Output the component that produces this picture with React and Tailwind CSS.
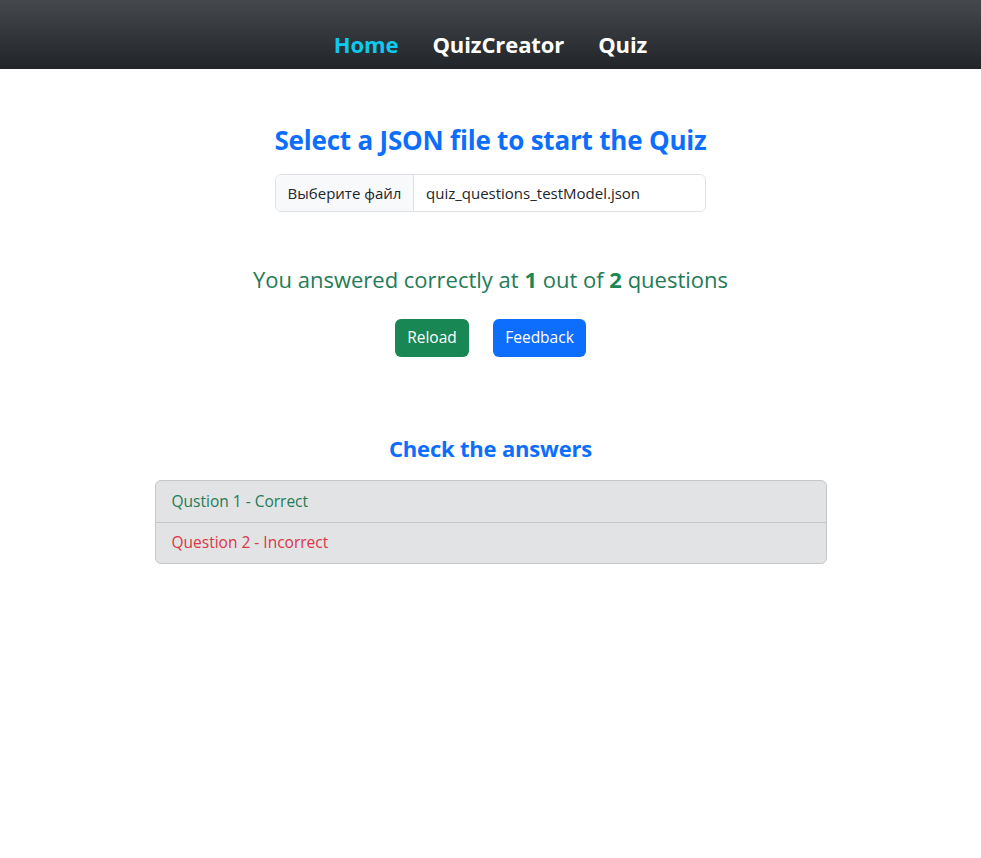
import React from 'react';

const font = { fontFamily: '"Open Sans", "Noto Sans", sans-serif' };

function NavBar() {
  return (
    <nav className="h-[69px] bg-gradient-to-b from-[#45484c] to-[#212529] flex items-end justify-center pb-[10px]">
      <ul className="flex gap-[34px] text-[22px] font-bold leading-[30px] tracking-[-0.1px]">
        <li className="text-[#0dcaf0]">Home</li>
        <li className="text-white">QuizCreator</li>
        <li className="text-white">Quiz</li>
      </ul>
    </nav>
  );
}

export default function App() {
  const results = [
    { label: 'Qustion 1 - Correct', ok: true },
    { label: 'Question 2 - Incorrect', ok: false },
  ];

  return (
    <div className="min-h-[858px] bg-white" style={font}>
      <NavBar />

      <main className="flex flex-col items-center">
        <h2 className="mt-[53px] text-[26px] font-bold text-[#0d6efd] leading-[36px] tracking-[-0.2px]">
          Select a JSON file to start the Quiz
        </h2>

        {/* File picker */}
        <div className="mt-[16px] w-[431px] h-[38px] flex border border-[#dee2e6] rounded-[6px] overflow-hidden text-[15px] text-[#212529]">
          <span className="w-[138px] flex items-center justify-center bg-[#f8f9fa] border-r border-[#dee2e6]">
            Выберите файл
          </span>
          <span className="flex items-center pl-[12px]">quiz_questions_testModel.json</span>
        </div>

        <p className="mt-[52px] text-[22px] text-[#237b57] leading-[30px]">
          You answered correctly at <b className="text-[#198754]">1</b> out of <b className="text-[#198754]">2</b> questions
        </p>

        <div className="mt-[25px] flex gap-[24px] text-[15.5px] text-white">
          <button className="w-[74px] h-[38px] rounded-[6px] bg-[#198754]">Reload</button>
          <button className="w-[93px] h-[38px] rounded-[6px] bg-[#0d6efd]">Feedback</button>
        </div>

        <h3 className="mt-[76px] text-[22px] font-bold text-[#0d6efd] leading-[30px] tracking-[-0.2px]">
          Check the answers
        </h3>

        {/* Answers accordion */}
        <div className="mt-[17px] w-[672px] rounded-[6px] border border-[#c6c7c8] bg-[#e2e3e5] overflow-hidden text-[15.5px]">
          {results.map((r, i) => (
            <div
              key={i}
              className={`h-[41px] flex items-center px-[16px] ${i > 0 ? 'border-t border-[#c6c7c8]' : ''} ${r.ok ? 'text-[#237b57]' : 'text-[#dc3545]'}`}
            >
              {r.label}
            </div>
          ))}
        </div>
      </main>
    </div>
  );
}
